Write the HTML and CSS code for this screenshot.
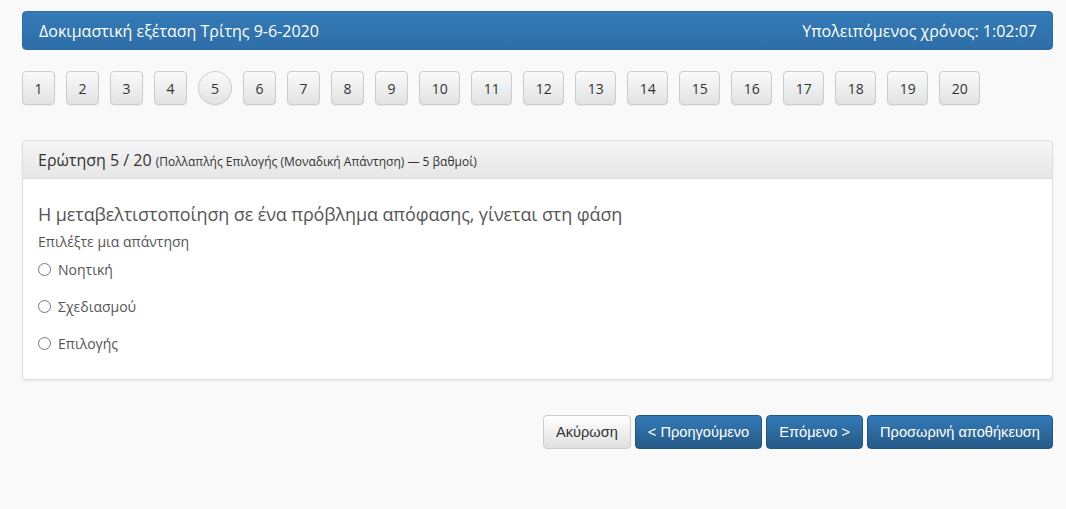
FILE: index.html
```html
<!DOCTYPE html>
<html lang="el">
<head>
<meta charset="UTF-8">
<title>Δοκιμαστική εξέταση</title>
<link rel="stylesheet" href="styles.css">
</head>
<body>
<div class="page">
  <div class="exam-bar">
    <span class="exam-title">Δοκιμαστική εξέταση Τρίτης 9-6-2020</span>
    <span class="exam-timer">Υπολειπόμενος χρόνος: 1:02:07</span>
  </div>

  <div class="pager">
    <button class="q-num">1</button>
    <button class="q-num">2</button>
    <button class="q-num">3</button>
    <button class="q-num">4</button>
    <button class="q-num current">5</button>
    <button class="q-num">6</button>
    <button class="q-num">7</button>
    <button class="q-num">8</button>
    <button class="q-num">9</button>
    <button class="q-num">10</button>
    <button class="q-num">11</button>
    <button class="q-num">12</button>
    <button class="q-num">13</button>
    <button class="q-num">14</button>
    <button class="q-num">15</button>
    <button class="q-num">16</button>
    <button class="q-num">17</button>
    <button class="q-num">18</button>
    <button class="q-num">19</button>
    <button class="q-num">20</button>
  </div>

  <div class="panel">
    <div class="panel-heading">
      Ερώτηση 5 / 20 <small>(Πολλαπλής Επιλογής (Μοναδική Απάντηση) — 5 βαθμοί)</small>
    </div>
    <div class="panel-body">
      <div class="question">Η μεταβελτιστοποίηση σε ένα πρόβλημα απόφασης, γίνεται στη φάση</div>
      <div class="hint">Επιλέξτε μια απάντηση</div>
      <label class="choice"><input type="radio" name="q5"> Νοητική</label>
      <label class="choice"><input type="radio" name="q5"> Σχεδιασμού</label>
      <label class="choice"><input type="radio" name="q5"> Επιλογής</label>
    </div>
  </div>

  <div class="actions">
    <button class="btn btn-default">Ακύρωση</button>
    <button class="btn btn-primary">&lt; Προηγούμενο</button>
    <button class="btn btn-primary">Επόμενο &gt;</button>
    <button class="btn btn-primary">Προσωρινή αποθήκευση</button>
  </div>
</div>
</body>
</html>
```

FILE: styles.css
```css
body {
  font-family: 'Open Sans', 'Noto Sans', sans-serif;
  margin: 0;
  background-color: #f9f9f9;
  color: #333;
  font-size: 14px;
}

.page {
  padding: 11px 13px 0 22px;
}

/* πάνω μπάρα */
.exam-bar {
  display: flex;
  justify-content: space-between;
  align-items: center;
  height: 39px;
  padding: 0 15px 0 16px;
  border-radius: 4px;
  background: linear-gradient(to bottom, #337ab7 0%, #2e6ea8 100%);
  border: 1px solid #2e6da4;
  box-sizing: border-box;
  color: #fff;
  font-size: 16px;
}

/* αριθμοί ερωτήσεων */
.pager {
  display: flex;
  gap: 11px;
  margin-top: 21px;
}

.q-num {
  height: 34px;
  min-width: 33px;
  padding: 0 11.5px;
  border: 1px solid #ccc;
  border-radius: 4px;
  background: linear-gradient(to bottom, #fafafa 0%, #e2e2e2 100%);
  font-family: 'Open Sans', sans-serif;
  font-size: 14px;
  color: #333;
  box-shadow: 0 1px 1px rgba(0,0,0,0.05);
}

.q-num.current {
  width: 34px;
  min-width: 34px;
  border-radius: 50%;
  padding: 0;
}

/* ερώτηση */
.panel {
  margin-top: 35px;
  background-color: #fff;
  border: 1px solid #ddd;
  border-radius: 4px;
  box-shadow: 0 1px 2px rgba(0,0,0,0.08);
}

.panel-heading {
  height: 37px;
  padding: 0 15px;
  display: flex;
  align-items: center;
  gap: 4px;
  background: linear-gradient(to bottom, #f5f5f5 0%, #e6e6e6 100%);
  border-bottom: 1px solid #ddd;
  border-radius: 4px 4px 0 0;
  font-size: 16px;
  color: #333;
}

.panel-heading small {
  font-size: 12px;
  padding-top: 3px;
}

.panel-body {
  padding: 23px 15px 17px;
  color: #555;
}

.question {
  font-size: 18px;
  letter-spacing: -0.11px;
  line-height: 24px;
}

.hint {
  margin-top: 6px;
  line-height: 19px;
}

.choice {
  display: flex;
  align-items: center;
  height: 37px;
}

.choice input {
  margin: 0 7px 0 0;
  width: 13px;
  height: 13px;
}

/* κουμπιά */
.actions {
  display: flex;
  justify-content: flex-end;
  gap: 4px;
  margin-top: 35px;
}

.btn {
  height: 34px;
  padding: 0 12px;
  border-radius: 4px;
  font-family: 'Liberation Sans', Arial, sans-serif;
  font-size: 14.6px;
  cursor: pointer;
}

.btn-default {
  background: linear-gradient(to bottom, #fff 0%, #e0e0e0 100%);
  border: 1px solid #ccc;
  color: #333;
}

.btn-primary {
  background: linear-gradient(to bottom, #337ab7 0%, #265a88 100%);
  border: 1px solid #245580;
  color: #fff;
}
```
